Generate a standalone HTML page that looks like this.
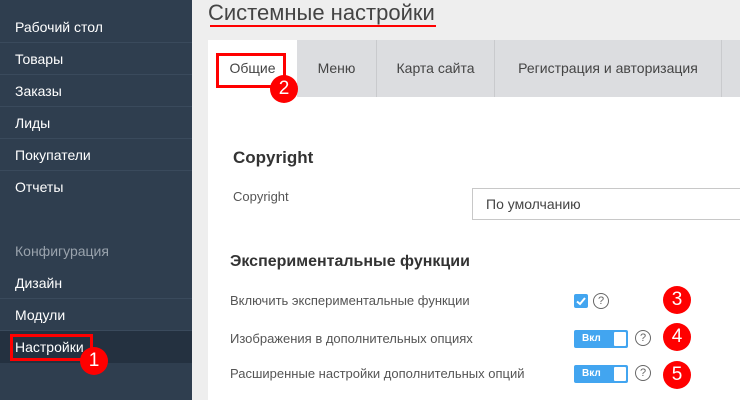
<!DOCTYPE html>
<html><head><meta charset="utf-8"><style>
*{margin:0;padding:0;box-sizing:border-box}
body{width:740px;height:400px;overflow:hidden;background:#eeeeee;font-family:"Liberation Sans","DejaVu Sans",sans-serif;position:relative}
.sb{position:absolute;left:0;top:0;width:192px;height:400px;background:#2f3e4f}
.it{position:absolute;left:0;width:192px;height:32px;color:#fff;font-size:14px;line-height:32px;padding-left:15px;border-bottom:1px solid #3a4a5c}
.a{position:absolute}
.tab{position:absolute;top:40px;height:57px;line-height:57px;font-size:14px;color:#444;text-align:center;background:#dcdde0;border-right:1px solid #c9cacd}
.lbl{position:absolute;left:230px;font-size:13px;color:#555}
.c{position:absolute;width:28px;height:28px;border-radius:50%;background:#f00;color:#fff;font-size:19px;text-align:center;line-height:28px}
.tg{position:absolute;left:574px;width:54px;height:18px;background:#42a5f0;border-radius:2px;color:#fff;font-size:10px;font-weight:bold;line-height:18px;padding-left:8px}
.tg:after{content:"";position:absolute;right:2px;top:2px;width:12px;height:14px;background:#fff;border-radius:1px}
.q{position:absolute;width:16px;height:16px;border:1.3px solid #666;border-radius:50%;font-size:11px;color:#666;text-align:center;line-height:14px}
</style></head><body>
<div class="sb">
<div class="it" style="top:11px">Рабочий стол</div>
<div class="it" style="top:43px">Товары</div>
<div class="it" style="top:75px">Заказы</div>
<div class="it" style="top:107px">Лиды</div>
<div class="it" style="top:139px">Покупатели</div>
<div class="it" style="top:171px;border:none">Отчеты</div>
<div class="it" style="top:235px;color:#9aa3ad;border:none">Конфигурация</div>
<div class="it" style="top:267px">Дизайн</div>
<div class="it" style="top:299px">Модули</div>
<div class="it" style="top:331px;background:#243140;border:none">Настройки</div>
</div>
<div class="a" style="left:10px;top:334px;width:83px;height:27px;border:3px solid #f00"></div>
<div class="c" style="left:80px;top:347px">1</div>
<div class="a" style="left:208px;top:0;font-size:22px;color:#444;line-height:26px">Системные настройки</div>
<div class="a" style="left:210px;top:25px;width:226px;height:2px;background:#f00"></div>
<div class="a" style="left:208px;top:40px;width:532px;height:360px;background:#fff"></div>
<div class="tab" style="left:208px;width:89px;background:#fff;border:none">Общие</div>
<div class="tab" style="left:297px;width:80px">Меню</div>
<div class="tab" style="left:377px;width:118px">Карта сайта</div>
<div class="tab" style="left:495px;width:227px">Регистрация и авторизация</div>
<div class="tab" style="left:722px;width:18px;border:none"></div>
<div class="a" style="left:216px;top:53px;width:70px;height:35px;border:3px solid #f00"></div>
<div class="c" style="left:270px;top:75px">2</div>
<div class="a" style="left:233px;top:148px;font-size:17px;color:#333;font-weight:bold">Copyright</div>
<div class="lbl" style="left:233px;top:189px">Copyright</div>
<div class="a" style="left:472px;top:188px;width:280px;height:32px;border:1px solid #c8c8c8;font-size:14px;color:#444;line-height:30px;padding-left:13px">По умолчанию</div>
<div class="a" style="left:230px;top:253px;font-size:16px;color:#333;font-weight:bold">Экспериментальные функции</div>
<div class="lbl" style="top:293px">Включить экспериментальные функции</div>
<div class="lbl" style="top:331px">Изображения в дополнительных опциях</div>
<div class="lbl" style="top:366px">Расширенные настройки дополнительных опций</div>
<div class="a" style="left:574px;top:294px;width:14px;height:14px;background:#42a5f0;border-radius:2px"><svg width="14" height="14"><path d="M3 7.5L6 10L11 4" stroke="#fff" stroke-width="2" fill="none"/></svg></div>
<div class="q" style="left:593px;top:293px">?</div>
<div class="c" style="left:663px;top:286px">3</div>
<div class="tg" style="top:330px">Вкл</div>
<div class="q" style="left:635px;top:330px">?</div>
<div class="c" style="left:663px;top:323px">4</div>
<div class="tg" style="top:365px">Вкл</div>
<div class="q" style="left:635px;top:365px">?</div>
<div class="c" style="left:663px;top:361px">5</div>
</body></html>
